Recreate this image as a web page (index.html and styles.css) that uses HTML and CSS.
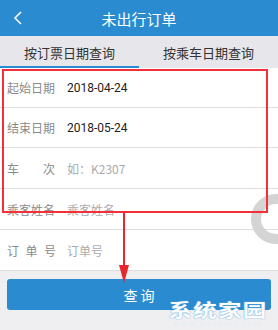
FILE: index.html
```html
<!DOCTYPE html>
<html lang="zh-CN">
<head>
<meta charset="utf-8">
<link rel="stylesheet" href="styles.css">
</head>
<body>
<div class="page">
  <header class="header">
    <svg class="back" width="12" height="16" viewBox="0 0 12 16"><path d="M9 2 L3 8 L9 14" fill="none" stroke="#fff" stroke-width="1.6"/></svg>
    <div class="title">未出行订单</div>
    <div></div>
  </header>
  <nav class="tabs">
    <div class="tab active">按订票日期查询</div>
    <div class="tab">按乘车日期查询</div>
  </nav>
  <section class="form">
    <div class="row"><span class="label">起始日期</span><span class="value">2018-04-24</span></div>
    <div class="row"><span class="label">结束日期</span><span class="value">2018-05-24</span></div>
    <div class="row"><span class="label spread2"><span>车</span><span>次</span></span><span class="value ph">如：K2307</span></div>
    <div class="row"><span class="label">乘客姓名</span><span class="value ph">乘客姓名</span></div>
    <div class="row"><span class="label spread3"><span>订</span><span>单</span><span>号</span></span><span class="value ph">订单号</span></div>
  </section>
  <div class="actions">
    <button class="btn">查 询</button>
  </div>
  <div class="ring"></div>
  <div class="redbox"></div>
  <svg class="arrow" width="20" height="80" viewBox="0 0 20 80"><line x1="10" y1="0" x2="10" y2="60" stroke="#e8262e" stroke-width="2"/><path d="M5 52 L15 52 L10 70 Z" fill="#e8262e"/></svg>
  <div class="watermark"><div class="wm-big">系统家园</div><div class="wm-small">www.boledir.com</div></div>
</div>
</body>
</html>
```
FILE: styles.css
```css
html, body { margin: 0; padding: 0; }
body { width: 278px; height: 330px; overflow: hidden; background: #efeff2; font-family: Roboto, "Noto Sans CJK SC", sans-serif; }
.page { position: relative; width: 278px; height: 330px; overflow: hidden; }
.header { height: 36px; background: #2a8bd1; display: grid; grid-template-columns: 40px 1fr 40px; align-items: center; }
.back { margin-left: 12px; }
.title { color: #fff; font-size: 15px; text-align: center; font-family: "Noto Sans CJK SC", sans-serif; }
.tabs { height: 32px; display: flex; background: #e7e7eb; }
.tab { flex: 1; display: flex; align-items: center; justify-content: center; font-size: 13px; color: #333; font-family: "Noto Sans CJK SC", sans-serif; box-sizing: border-box; }
.tab.active { border-bottom: 2px solid #2a8bd1; padding-top: 2px; }
.form { background: #fff; }
.row { height: 39px; border-bottom: 1px solid #dedede; display: flex; align-items: center; padding-left: 7px; font-size: 12px; }
.row:nth-child(3), .row:nth-child(4), .row:nth-child(5) { height: 40px; }
.label { width: 60px; color: #8a8a8a; font-family: "Noto Sans CJK SC", sans-serif; display: flex; }
.spread2 { width: 48px; margin-right: 12px; justify-content: space-between; }
.spread3 { width: 49px; margin-right: 11px; justify-content: space-between; }
.value { color: #222; }
.value.ph { color: #ababab; font-family: "Noto Sans CJK SC", sans-serif; }
.actions { padding: 8px 7px; }
.btn { display: block; width: 100%; height: 31px; border: none; border-radius: 3px; background: #2a8bd1; color: #fff; font-size: 14px; font-family: "Noto Sans CJK SC", sans-serif; padding: 0; }
.ring { position: absolute; left: 251px; top: 194px; width: 30px; height: 30px; border: 10px solid #d4d4d4; border-radius: 50%; }
.redbox { position: absolute; left: 2px; top: 69px; width: 262px; height: 140px; border: 2px solid #f2303a; }
.arrow { position: absolute; left: 114px; top: 213px; }
.watermark { position: absolute; left: 166px; top: 299px; width: 104px; text-align: center; }
.wm-big { font-size: 18px; font-weight: bold; color: #fff; letter-spacing: 1px; line-height: 20px; height: 21px; font-family: "Noto Sans CJK SC", sans-serif; transform: scaleX(1.3); text-shadow: 0 0 1px #6aaee0, 0 0 1px #6aaee0; white-space: nowrap; }
.wm-small { font-size: 8px; color: #e6ecf1; letter-spacing: 1.5px; line-height: 9px; white-space: nowrap; font-family: "DejaVu Sans", sans-serif; }
```
